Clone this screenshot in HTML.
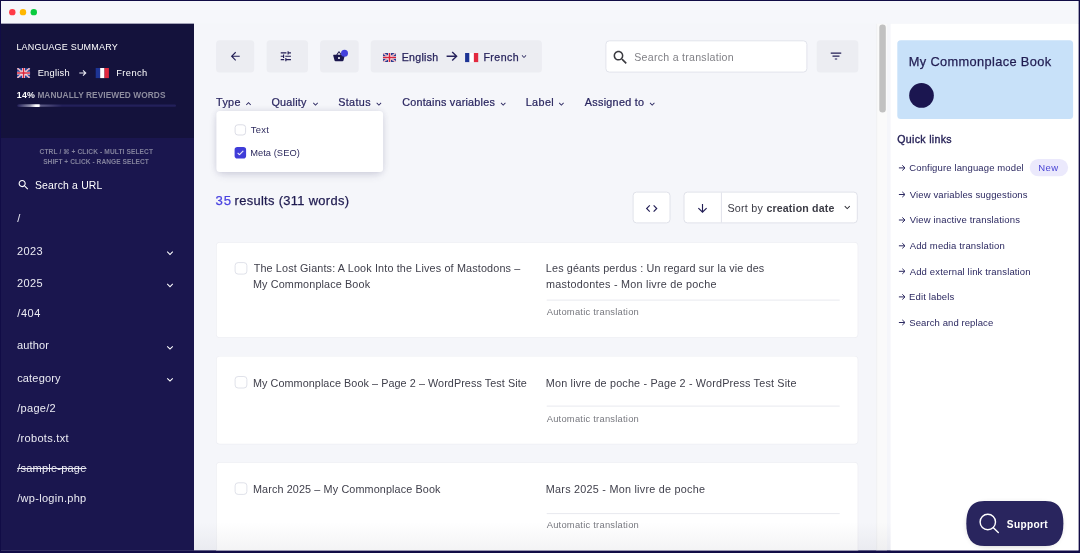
<!DOCTYPE html>
<html lang="en">
<head>
<meta charset="utf-8">
<title>Translations</title>
<style>
html,body{margin:0;padding:0;}
body{width:1080px;height:553px;overflow:hidden;background:#110c46;position:relative;font-family:"Liberation Sans",sans-serif;}
.a{position:absolute;}
.t{position:absolute;white-space:nowrap;line-height:16px;font-family:"Liberation Sans","DejaVu Sans",sans-serif;}
#shapes{position:absolute;left:0;top:0;}
</style>
</head>
<body>
<div class="a" style="left:1px;top:1px;width:1078px;height:550px;background:#f5f6fa;"></div>
<svg id="shapes" width="1080" height="553" viewBox="0 0 1080 553">
<rect x="0.00" y="0.00" width="1080.00" height="553.00" rx="0.0" fill="#110c46" />
<rect x="1.00" y="1.00" width="1077.70" height="549.60" rx="0.0" fill="#f5f6fa" />
<rect x="1.00" y="1.00" width="1077.70" height="22.80" rx="0.0" fill="#f6f7fb" />
<circle cx="12.30" cy="12.15" r="3.20" fill="#ff3b47"/>
<circle cx="23.00" cy="12.15" r="3.20" fill="#ffb700"/>
<circle cx="33.80" cy="12.15" r="3.20" fill="#0acb3e"/>
<rect x="1.00" y="23.80" width="193.00" height="526.80" rx="0.0" fill="#1a164e" />
<rect x="1.00" y="23.80" width="193.00" height="114.20" rx="0.0" fill="#14123c" />
<g transform="translate(16.90 68.00) scale(0.5115 0.5050)"><clipPath id="c16"><rect width="26" height="20" rx="1.5"/></clipPath><g clip-path="url(#c16)"><rect width="26" height="20" fill="#2a3b8f"/><path d="M0 0L26 20M26 0L0 20" stroke="#fff" stroke-width="3"/><path d="M0 0L26 20M26 0L0 20" stroke="#d9243c" stroke-width="1"/><path d="M13 0V20M0 10H26" stroke="#fff" stroke-width="5.6"/><path d="M13 0V20M0 10H26" stroke="#d9243c" stroke-width="3.2"/></g></g>
<g transform="translate(95.70 68.00) scale(1.0154 1.0100)"><rect width="4.4" height="10" fill="#1d3494"/><rect x="4.4" width="4.3" height="10" fill="#fff"/><rect x="8.7" width="4.3" height="10" fill="#e2293f"/></g>
<path d="M79.30 73.00H85.48M83.00 70.30L85.80 73.00L83.00 75.70" fill="none" stroke="#e9e9f2" stroke-width="1.05"/>
<rect x="17.20" y="104.50" width="158.80" height="2.30" rx="1.1" fill="#23205a" />
<defs><linearGradient id="pg" x1="0" x2="1" y1="0" y2="0"><stop offset="0" stop-color="#fff" stop-opacity="0"/><stop offset=".55" stop-color="#fff" stop-opacity=".5"/><stop offset=".8" stop-color="#fff"/><stop offset=".93" stop-color="#fff"/><stop offset="1" stop-color="#fff" stop-opacity=".2"/></linearGradient></defs>
<defs><linearGradient id="pt" x1="0" x2="1" y1="0" y2="0"><stop offset="0" stop-color="#fff" stop-opacity=".28"/><stop offset="1" stop-color="#fff" stop-opacity="0"/></linearGradient></defs>
<rect x="39.00" y="104.50" width="23.00" height="2.30" rx="0.0" fill="url(#pt)" />
<rect x="17.20" y="104.30" width="23.30" height="2.70" rx="1.3" fill="url(#pg)" />
<path transform="translate(16.94 178.34) scale(0.5500)" fill="#fff" d="M15.5 14h-.79l-.28-.27C15.41 12.59 16 11.11 16 9.5 16 5.91 13.09 3 9.5 3S3 5.91 3 9.5 5.91 16 9.5 16c1.61 0 3.09-.59 4.23-1.57l.27.28v.79l5 4.99L20.49 19l-4.99-5zm-6 0C7.01 14 5 11.99 5 9.5S7.01 5 9.5 5 14 7.01 14 9.5 11.99 14 9.5 14z" />
<path transform="translate(163.70 246.84) scale(0.5250)" fill="#fff" d="M16.59 8.59L12 13.17 7.41 8.59 6 10l6 6 6-6z" />
<path transform="translate(163.70 279.04) scale(0.5250)" fill="#fff" d="M16.59 8.59L12 13.17 7.41 8.59 6 10l6 6 6-6z" />
<path transform="translate(163.70 341.44) scale(0.5250)" fill="#fff" d="M16.59 8.59L12 13.17 7.41 8.59 6 10l6 6 6-6z" />
<path transform="translate(163.70 373.44) scale(0.5250)" fill="#fff" d="M16.59 8.59L12 13.17 7.41 8.59 6 10l6 6 6-6z" />
<rect x="216.10" y="40.30" width="38.10" height="32.30" rx="3.5" fill="#ecedf2" />
<path transform="translate(228.65 49.65) scale(0.5542)" fill="#221e55" d="M20 11H7.83l5.59-5.59L12 4l-8 8 8 8 1.41-1.41L7.83 13H20v-2z" />
<rect x="266.60" y="40.30" width="41.40" height="32.30" rx="3.5" fill="#ecedf2" />
<path transform="translate(279.05 49.45) scale(0.5667)" fill="#221e55" d="M3 17v2h6v-2H3zM3 5v2h10V5H3zm10 16v-2h8v-2h-8v-2h-2v6h2zM7 9v2H3v2h4v2h2V9H7zm14 4v-2H11v2h10zm-6-4h2V7h4V5h-4V3h-2v6z" />
<rect x="320.10" y="40.30" width="38.60" height="32.30" rx="3.5" fill="#ecedf2" />
<path transform="translate(332.65 50.11) scale(0.5292)" fill="#1b174e" d="M17.21 9l-4.38-6.56c-.19-.28-.51-.42-.83-.42-.32 0-.64.14-.83.43L6.79 9H2c-.55 0-1 .45-1 1 0 .09.01.18.04.27l2.54 9.27c.23.84 1 1.46 1.92 1.46h13c.92 0 1.69-.62 1.93-1.46l2.54-9.27L23 10c0-.55-.45-1-1-1h-4.79zM9 9l3-4.4L15 9H9zm3 8c-1.1 0-2-.9-2-2s.9-2 2-2 2 .9 2 2-.9 2-2 2z" />
<circle cx="344.50" cy="53.20" r="3.50" fill="#4340dc"/>
<rect x="370.70" y="40.30" width="171.20" height="32.30" rx="3.5" fill="#ecedf2" />
<g transform="translate(382.90 53.00) scale(0.5077 0.4550)"><clipPath id="c382"><rect width="26" height="20" rx="1.5"/></clipPath><g clip-path="url(#c382)"><rect width="26" height="20" fill="#2a3b8f"/><path d="M0 0L26 20M26 0L0 20" stroke="#fff" stroke-width="3"/><path d="M0 0L26 20M26 0L0 20" stroke="#d9243c" stroke-width="1"/><path d="M13 0V20M0 10H26" stroke="#fff" stroke-width="5.6"/><path d="M13 0V20M0 10H26" stroke="#d9243c" stroke-width="3.2"/></g></g>
<path d="M446.60 56.20H456.18M452.20 51.90L456.60 56.20L452.20 60.50" fill="none" stroke="#27235c" stroke-width="1.40"/>
<g transform="translate(465.10 53.00) scale(1.0077 0.9100)"><rect width="4.4" height="10" fill="#1d3494"/><rect x="4.4" width="4.3" height="10" fill="#fff"/><rect x="8.7" width="4.3" height="10" fill="#e2293f"/></g>
<path transform="translate(519.40 51.83) scale(0.3833)" fill="#27235c" d="M16.59 8.59L12 13.17 7.41 8.59 6 10l6 6 6-6z" />
<rect x="605.90" y="40.80" width="201.00" height="31.30" rx="3.5" fill="#fff" stroke="#e2e4ec" stroke-width="1" />
<path transform="translate(611.34 48.54) scale(0.7542)" fill="#3a3a40" d="M15.5 14h-.79l-.28-.27C15.41 12.59 16 11.11 16 9.5 16 5.91 13.09 3 9.5 3S3 5.91 3 9.5 5.91 16 9.5 16c1.61 0 3.09-.59 4.23-1.57l.27.28v.79l5 4.99L20.49 19l-4.99-5zm-6 0C7.01 14 5 11.99 5 9.5S7.01 5 9.5 5 14 7.01 14 9.5 11.99 14 9.5 14z" />
<rect x="816.70" y="40.30" width="41.60" height="32.30" rx="3.5" fill="#ecedf2" />
<path transform="translate(829.00 49.10) scale(0.5833)" fill="#221e55" d="M10 18h4v-2h-4v2zM3 6v2h18V6H3zm3 7h12v-2H6v2z" />
<path transform="translate(243.50 98.72) scale(0.4167)" fill="#2a2660" d="M12 8l-6 6 1.41 1.41L12 10.83l4.59 4.58L18 14z" />
<path transform="translate(310.50 98.97) scale(0.4167)" fill="#2a2660" d="M16.59 8.59L12 13.17 7.41 8.59 6 10l6 6 6-6z" />
<path transform="translate(373.90 98.97) scale(0.4167)" fill="#2a2660" d="M16.59 8.59L12 13.17 7.41 8.59 6 10l6 6 6-6z" />
<path transform="translate(498.20 98.97) scale(0.4167)" fill="#2a2660" d="M16.59 8.59L12 13.17 7.41 8.59 6 10l6 6 6-6z" />
<path transform="translate(556.40 98.97) scale(0.4167)" fill="#2a2660" d="M16.59 8.59L12 13.17 7.41 8.59 6 10l6 6 6-6z" />
<path transform="translate(647.20 98.97) scale(0.4167)" fill="#2a2660" d="M16.59 8.59L12 13.17 7.41 8.59 6 10l6 6 6-6z" />
<rect x="633.10" y="192.10" width="36.90" height="30.80" rx="3.5" fill="#fff" stroke="#e0e2ea" stroke-width="1" />
<path transform="translate(644.70 201.50) scale(0.5833)" fill="#221e55" d="M9.4 16.6L4.8 12l4.6-4.6L8 6l-6 6 6 6 1.4-1.4zm5.2 0l4.6-4.6-4.6-4.6L16 6l6 6-6 6-1.4-1.4z" />
<rect x="684.00" y="192.10" width="173.30" height="30.80" rx="3.5" fill="#fff" stroke="#e0e2ea" stroke-width="1" />
<rect x="720.90" y="192.40" width="1.00" height="30.20" rx="0.0" fill="#e0e2ea" />
<path transform="translate(695.70 201.70) scale(0.5667)" fill="#221e55" d="M20 12l-1.41-1.41L13 16.17V4h-2v12.17l-5.58-5.59L4 12l8 8 8-8z" />
<path transform="translate(841.55 201.66) scale(0.4750)" fill="#2c2c34" d="M16.59 8.59L12 13.17 7.41 8.59 6 10l6 6 6-6z" />
<rect x="216.00" y="242.00" width="642.30" height="95.90" rx="4.0" fill="#edeef3" />
<rect x="216.70" y="242.70" width="640.90" height="94.50" rx="3.3" fill="#fff" />
<rect x="235.10" y="262.60" width="11.80" height="11.50" rx="3.0" fill="#fff" stroke="#e0e2ea" stroke-width="1" />
<rect x="546.70" y="299.60" width="293.00" height="1.00" rx="0.0" fill="#e8e9ef" />
<rect x="216.00" y="355.90" width="642.30" height="88.60" rx="4.0" fill="#edeef3" />
<rect x="216.70" y="356.60" width="640.90" height="87.20" rx="3.3" fill="#fff" />
<rect x="235.10" y="376.50" width="11.80" height="11.50" rx="3.0" fill="#fff" stroke="#e0e2ea" stroke-width="1" />
<rect x="546.70" y="405.60" width="293.00" height="1.00" rx="0.0" fill="#e8e9ef" />
<rect x="216.00" y="462.10" width="642.30" height="98.60" rx="4.0" fill="#edeef3" />
<rect x="216.70" y="462.80" width="640.90" height="97.20" rx="3.3" fill="#fff" />
<rect x="235.10" y="482.80" width="11.80" height="11.60" rx="3.0" fill="#fff" stroke="#e0e2ea" stroke-width="1" />
<rect x="546.70" y="513.10" width="293.00" height="1.00" rx="0.0" fill="#e8e9ef" />
<defs><filter id="sh1" x="-20%" y="-40%" width="140%" height="200%"><feGaussianBlur stdDeviation="5"/></filter><filter id="sh2" x="-20%" y="-40%" width="140%" height="200%"><feGaussianBlur stdDeviation="3"/></filter></defs>
<rect x="218" y="115" width="163" height="59" rx="4" fill="#28285a" opacity=".17" filter="url(#sh1)"/>
<rect x="216.4" y="110.9" width="166.7" height="61.1" rx="4" fill="#28285a" opacity=".10" filter="url(#sh2)"/>
<rect x="216.40" y="110.90" width="166.70" height="61.10" rx="3.5" fill="#fff" />
<rect x="235.10" y="124.80" width="10.50" height="10.20" rx="2.8" fill="#fff" stroke="#dcdde6" stroke-width="1" />
<rect x="234.60" y="147.10" width="11.50" height="11.40" rx="2.8" fill="#3f3cd8" />
<path transform="translate(236.40 148.80) scale(0.3333)" fill="#fff" d="M9 16.17L4.83 12l-1.4 1.4L9 19 21 7l-1.41-1.41z" stroke="#fff" stroke-width="1.2"/>
<rect x="876.40" y="23.80" width="10.60" height="526.80" rx="0.0" fill="#fafafa" />
<rect x="876.40" y="23.80" width="0.80" height="526.80" rx="0.0" fill="#ededf0" />
<rect x="879.30" y="24.60" width="6.50" height="87.80" rx="3.2" fill="#c1c1c1" />
<rect x="890.60" y="23.80" width="188.10" height="526.80" rx="0.0" fill="#fff" />
<rect x="897.30" y="40.30" width="175.80" height="78.70" rx="3.5" fill="#c8e1f9" />
<circle cx="921.50" cy="95.40" r="12.35" fill="#1b1650"/>
<rect x="1029.70" y="159.00" width="38.40" height="17.20" rx="8.6" fill="#ebe9fc" />
<path d="M898.90 167.90H904.70M902.30 165.30L905.00 167.90L902.30 170.50" fill="none" stroke="#2b2860" stroke-width="1.00"/>
<path d="M898.90 194.50H904.70M902.30 191.90L905.00 194.50L902.30 197.10" fill="none" stroke="#2b2860" stroke-width="1.00"/>
<path d="M898.90 220.00H904.70M902.30 217.40L905.00 220.00L902.30 222.60" fill="none" stroke="#2b2860" stroke-width="1.00"/>
<path d="M898.90 245.80H904.70M902.30 243.20L905.00 245.80L902.30 248.40" fill="none" stroke="#2b2860" stroke-width="1.00"/>
<path d="M898.90 271.30H904.70M902.30 268.70L905.00 271.30L902.30 273.90" fill="none" stroke="#2b2860" stroke-width="1.00"/>
<path d="M898.90 296.90H904.70M902.30 294.30L905.00 296.90L902.30 299.50" fill="none" stroke="#2b2860" stroke-width="1.00"/>
<path d="M898.90 322.50H904.70M902.30 319.90L905.00 322.50L902.30 325.10" fill="none" stroke="#2b2860" stroke-width="1.00"/>
<defs><linearGradient id="bf" x1="0" x2="0" y1="0" y2="1"><stop offset="0" stop-color="#3c3c5a" stop-opacity="0"/><stop offset="1" stop-color="#3c3c5a" stop-opacity=".06"/></linearGradient></defs>
<rect x="194.00" y="522.00" width="696.60" height="28.60" rx="0.0" fill="url(#bf)" />
<rect x="968" y="504" width="93" height="42" rx="20" fill="#000" opacity=".22" filter="url(#sh2)"/>
<path d="M984.30 500.90H1045.40C1057.64 500.90 1063.40 508.10 1063.40 523.40C1063.40 538.70 1057.64 545.90 1045.40 545.90H984.30C972.06 545.90 966.30 538.70 966.30 523.40C966.30 508.10 972.06 500.90 984.30 500.90Z" fill="#29255e"/>
<circle cx="987.8" cy="522" r="7.7" fill="none" stroke="#fff" stroke-width="1.4"/><path d="M993.4 527.7L998.3 532.5" stroke="#fff" stroke-width="1.4" stroke-linecap="round"/>
<rect x="0.00" y="550.60" width="1080.00" height="2.40" rx="0.0" fill="#110c46" />
<rect x="1078.70" y="0.00" width="1.30" height="553.00" rx="0.0" fill="#110c46" />
<rect x="0.00" y="0.00" width="1.00" height="553.00" rx="0.0" fill="#110c46" />
<rect x="0.00" y="0.00" width="1080.00" height="1.00" rx="0.0" fill="#110c46" />
</svg>
<div id="txt" style="position:absolute;left:0;top:0;width:1080px;height:553px;will-change:transform;">
<span class="t" style="left:16.38px;top:39.00px;font-size:9.00px;line-height:16px;letter-spacing:0.200px;color:#fff;">LANGUAGE SUMMARY</span>
<span class="t" style="left:37.63px;top:65.00px;font-size:9.30px;line-height:16px;letter-spacing:0.265px;color:#fff;">English</span>
<span class="t" style="left:116.31px;top:65.00px;font-size:9.30px;line-height:16px;letter-spacing:0.385px;color:#fff;">French</span>
<span class="t" style="left:16.82px;top:87.00px;font-size:8.80px;line-height:16px;letter-spacing:0.238px;color:#fff;font-weight:700;">14%</span>
<span class="t" style="left:37.38px;top:87.00px;font-size:8.30px;line-height:16px;letter-spacing:0.079px;color:#8e8d9f;font-weight:700;">MANUALLY REVIEWED WORDS</span>
<span class="t" style="left:39.59px;top:145.00px;font-size:6.60px;line-height:13px;letter-spacing:0.112px;color:#82819c;font-weight:700;">CTRL / ⌘ + CLICK - MULTI SELECT</span>
<span class="t" style="left:43.16px;top:155.00px;font-size:6.60px;line-height:13px;letter-spacing:0.054px;color:#82819c;font-weight:700;">SHIFT + CLICK - RANGE SELECT</span>
<span class="t" style="left:34.93px;top:177.00px;font-size:10.40px;line-height:17px;letter-spacing:0.193px;color:#fff;">Search a URL</span>
<span class="t" style="left:17.25px;top:209.00px;font-size:11.00px;line-height:18px;letter-spacing:0.000px;color:#ebebf3;">/</span>
<span class="t" style="left:16.97px;top:242.00px;font-size:11.00px;line-height:18px;letter-spacing:0.401px;color:#ebebf3;">2023</span>
<span class="t" style="left:16.97px;top:274.00px;font-size:11.00px;line-height:18px;letter-spacing:0.375px;color:#ebebf3;">2025</span>
<span class="t" style="left:17.25px;top:304.00px;font-size:11.00px;line-height:18px;letter-spacing:0.590px;color:#ebebf3;">/404</span>
<span class="t" style="left:17.02px;top:336.00px;font-size:11.00px;line-height:18px;letter-spacing:0.126px;color:#ebebf3;">author</span>
<span class="t" style="left:17.15px;top:369.00px;font-size:11.00px;line-height:18px;letter-spacing:0.181px;color:#ebebf3;">category</span>
<span class="t" style="left:17.25px;top:399.00px;font-size:11.00px;line-height:18px;letter-spacing:0.291px;color:#ebebf3;">/page/2</span>
<span class="t" style="left:17.25px;top:429.00px;font-size:11.00px;line-height:18px;letter-spacing:0.301px;color:#ebebf3;">/robots.txt</span>
<span class="t" style="left:17.25px;top:459.00px;font-size:11.00px;line-height:18px;letter-spacing:0.218px;color:#ebebf3;text-decoration:line-through;">/sample-page</span>
<span class="t" style="left:17.25px;top:489.00px;font-size:11.00px;line-height:18px;letter-spacing:0.292px;color:#ebebf3;">/wp-login.php</span>
<span class="t" style="left:401.78px;top:48.00px;font-size:10.60px;line-height:18px;letter-spacing:0.285px;color:#27235c;-webkit-text-stroke:0.25px #27235c;">English</span>
<span class="t" style="left:483.45px;top:48.00px;font-size:10.60px;line-height:18px;letter-spacing:0.451px;color:#27235c;-webkit-text-stroke:0.25px #27235c;">French</span>
<span class="t" style="left:634.29px;top:48.00px;font-size:10.60px;line-height:18px;letter-spacing:0.266px;color:#808086;">Search a translation</span>
<span class="t" style="left:216.06px;top:93.00px;font-size:10.80px;line-height:18px;letter-spacing:0.336px;color:#2a2660;-webkit-text-stroke:0.22px #2a2660;">Type</span>
<span class="t" style="left:271.50px;top:93.00px;font-size:10.80px;line-height:18px;letter-spacing:0.212px;color:#2a2660;-webkit-text-stroke:0.22px #2a2660;">Quality</span>
<span class="t" style="left:338.18px;top:93.00px;font-size:10.80px;line-height:18px;letter-spacing:0.359px;color:#2a2660;-webkit-text-stroke:0.22px #2a2660;">Status</span>
<span class="t" style="left:402.16px;top:93.00px;font-size:10.80px;line-height:18px;letter-spacing:0.224px;color:#2a2660;-webkit-text-stroke:0.22px #2a2660;">Contains variables</span>
<span class="t" style="left:525.70px;top:93.00px;font-size:10.80px;line-height:18px;letter-spacing:0.398px;color:#2a2660;-webkit-text-stroke:0.22px #2a2660;">Label</span>
<span class="t" style="left:584.85px;top:93.00px;font-size:10.80px;line-height:18px;letter-spacing:0.275px;color:#2a2660;-webkit-text-stroke:0.22px #2a2660;">Assigned to</span>
<span class="t" style="left:250.82px;top:121.00px;font-size:9.40px;line-height:17px;letter-spacing:0.312px;color:#2d2a5e;">Text</span>
<span class="t" style="left:250.19px;top:145.00px;font-size:9.30px;line-height:16px;letter-spacing:0.056px;color:#2d2a5e;">Meta (SEO)</span>
<span class="t" style="left:215.51px;top:190.00px;font-size:13.20px;line-height:21px;letter-spacing:0.900px;color:#4a43e0;-webkit-text-stroke:0.25px #4a43e0;">35</span>
<span class="t" style="left:234.57px;top:190.00px;font-size:12.90px;line-height:21px;letter-spacing:0.321px;color:#1f1b50;-webkit-text-stroke:0.25px #1f1b50;">results (311 words)</span>
<span class="t" style="left:727.39px;top:199.00px;font-size:10.80px;line-height:18px;letter-spacing:0.202px;color:#3c3c46;">Sort by</span>
<span class="t" style="left:766.43px;top:199.00px;font-size:10.60px;line-height:18px;letter-spacing:0.160px;color:#3c3c46;font-weight:700;">creation date</span>
<span class="t" style="left:253.67px;top:259.00px;font-size:10.80px;line-height:18px;letter-spacing:0.152px;color:#40404c;">The Lost Giants: A Look Into the Lives of Mastodons –</span>
<span class="t" style="left:252.99px;top:275.00px;font-size:10.80px;line-height:18px;letter-spacing:0.136px;color:#40404c;">My Commonplace Book</span>
<span class="t" style="left:545.86px;top:259.00px;font-size:10.80px;line-height:18px;letter-spacing:0.138px;color:#40404c;">Les géants perdus : Un regard sur la vie des</span>
<span class="t" style="left:546.08px;top:275.00px;font-size:10.80px;line-height:18px;letter-spacing:0.251px;color:#40404c;">mastodontes - Mon livre de poche</span>
<span class="t" style="left:546.65px;top:303.00px;font-size:9.40px;line-height:17px;letter-spacing:0.232px;color:#77787f;">Automatic translation</span>
<span class="t" style="left:252.99px;top:374.00px;font-size:10.80px;line-height:18px;letter-spacing:0.071px;color:#40404c;">My Commonplace Book – Page 2 – WordPress Test Site</span>
<span class="t" style="left:545.86px;top:374.00px;font-size:10.80px;line-height:18px;letter-spacing:0.178px;color:#40404c;">Mon livre de poche - Page 2 - WordPress Test Site</span>
<span class="t" style="left:546.65px;top:410.00px;font-size:9.40px;line-height:17px;letter-spacing:0.232px;color:#77787f;">Automatic translation</span>
<span class="t" style="left:252.99px;top:480.00px;font-size:10.80px;line-height:18px;letter-spacing:0.124px;color:#40404c;">March 2025 – My Commonplace Book</span>
<span class="t" style="left:545.86px;top:480.00px;font-size:10.80px;line-height:18px;letter-spacing:0.249px;color:#40404c;">Mars 2025 - Mon livre de poche</span>
<span class="t" style="left:546.65px;top:516.00px;font-size:9.40px;line-height:17px;letter-spacing:0.232px;color:#77787f;">Automatic translation</span>
<span class="t" style="left:908.84px;top:51.00px;font-size:12.80px;line-height:21px;letter-spacing:0.353px;color:#211d52;-webkit-text-stroke:0.25px #211d52;">My Commonplace Book</span>
<span class="t" style="left:897.28px;top:130.00px;font-size:10.60px;line-height:18px;letter-spacing:0.308px;color:#231f55;-webkit-text-stroke:0.35px #231f55;">Quick links</span>
<span class="t" style="left:909.31px;top:159.00px;font-size:9.50px;line-height:17px;letter-spacing:0.129px;color:#2b2860;">Configure language model</span>
<span class="t" style="left:909.77px;top:186.00px;font-size:9.50px;line-height:17px;letter-spacing:0.133px;color:#2b2860;">View variables suggestions</span>
<span class="t" style="left:909.77px;top:211.00px;font-size:9.50px;line-height:17px;letter-spacing:0.145px;color:#2b2860;">View inactive translations</span>
<span class="t" style="left:909.70px;top:237.00px;font-size:9.50px;line-height:17px;letter-spacing:0.156px;color:#2b2860;">Add media translation</span>
<span class="t" style="left:909.70px;top:263.00px;font-size:9.50px;line-height:17px;letter-spacing:0.150px;color:#2b2860;">Add external link translation</span>
<span class="t" style="left:909.08px;top:288.00px;font-size:9.50px;line-height:17px;letter-spacing:0.130px;color:#2b2860;">Edit labels</span>
<span class="t" style="left:909.25px;top:314.00px;font-size:9.50px;line-height:17px;letter-spacing:0.092px;color:#2b2860;">Search and replace</span>
<span class="t" style="left:1038.35px;top:159.00px;font-size:9.50px;line-height:17px;letter-spacing:0.403px;color:#4a45d5;">New</span>
<span class="t" style="left:1006.82px;top:516.00px;font-size:10.10px;line-height:17px;letter-spacing:0.359px;color:#fff;font-weight:700;">Support</span>
</div>
</body>
</html>
